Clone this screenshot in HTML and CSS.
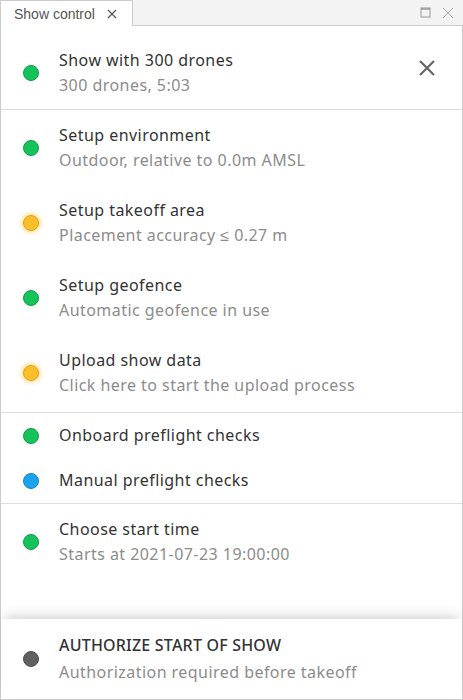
FILE: index.html
```html
<!DOCTYPE html>
<html lang="en">
<head>
    <meta charset="UTF-8">
    <title>Show control</title>
    <link rel="stylesheet" href="styles.css">
</head>
<body>
    <div class="window">
        <div class="tabbar">
            <div class="tab">
                <span>Show control</span>
                <svg class="tab-close" width="10" height="10" viewBox="0 0 10 10"><path d="M1 1L9 9M9 1L1 9" stroke="#555" stroke-width="1.2"/></svg>
            </div>
            <div class="window-buttons">
                <svg width="11" height="11" viewBox="0 0 11 11"><rect x="1" y="1" width="9" height="9" fill="none" stroke="#999" stroke-width="1"/><line x1="1" y1="2" x2="10" y2="2" stroke="#999" stroke-width="1.5"/></svg>
                <svg width="12" height="12" viewBox="0 0 12 12"><path d="M1 1L11 11M11 1L1 11" stroke="#aaa" stroke-width="1"/></svg>
            </div>
        </div>
        <div class="panel">
            <div class="item header-item">
                <span class="dot green"></span>
                <div class="text">
                    <div class="title">Show with 300 drones</div>
                    <div class="subtitle">300 drones, 5:03</div>
                </div>
                <svg class="close-btn" width="18" height="18" viewBox="0 0 18 18"><path d="M2 2L16 16M16 2L2 16" stroke="#666" stroke-width="2.2"/></svg>
            </div>

            <div class="group steps">
                <div class="item">
                    <span class="dot green"></span>
                    <div class="text">
                        <div class="title">Setup environment</div>
                        <div class="subtitle">Outdoor, relative to 0.0m AMSL</div>
                    </div>
                </div>
                <div class="item">
                    <span class="dot yellow"></span>
                    <div class="text">
                        <div class="title">Setup takeoff area</div>
                        <div class="subtitle">Placement accuracy ≤ 0.27 m</div>
                    </div>
                </div>
                <div class="item">
                    <span class="dot green"></span>
                    <div class="text">
                        <div class="title">Setup geofence</div>
                        <div class="subtitle">Automatic geofence in use</div>
                    </div>
                </div>
                <div class="item">
                    <span class="dot yellow"></span>
                    <div class="text">
                        <div class="title">Upload show data</div>
                        <div class="subtitle">Click here to start the upload process</div>
                    </div>
                </div>
            </div>

            <div class="group">
                <div class="item single">
                    <span class="dot green"></span>
                    <div class="text">
                        <div class="title">Onboard preflight checks</div>
                    </div>
                </div>
                <div class="item single">
                    <span class="dot blue"></span>
                    <div class="text">
                        <div class="title">Manual preflight checks</div>
                    </div>
                </div>
            </div>

            <div class="group last">
                <div class="item">
                    <span class="dot green"></span>
                    <div class="text">
                        <div class="title">Choose start time</div>
                        <div class="subtitle">Starts at 2021-07-23 19:00:00</div>
                    </div>
                </div>
            </div>

            <div class="footer">
                <div class="item">
                    <span class="dot grey"></span>
                    <div class="text">
                        <div class="title caps">AUTHORIZE START OF SHOW</div>
                        <div class="subtitle">Authorization required before takeoff</div>
                    </div>
                </div>
            </div>
        </div>
    </div>
</body>
</html>
```

FILE: styles.css
```css
body {
    margin: 0;
    background-color: #fff;
    font-family: 'Noto Sans', sans-serif;
}
.window {
    width: 463px;
    height: 700px;
    display: flex;
    flex-direction: column;
}
.tabbar {
    height: 26px;
    background-color: #f3f3f3;
    display: flex;
    align-items: stretch;
    justify-content: space-between;
    box-sizing: border-box;
    border-bottom: 1px solid #ccc;
}
.tab {
    width: 133px;
    box-sizing: border-box;
    background-color: #fff;
    border: 1px solid #ccc;
    border-bottom: none;
    margin-bottom: -1px;
    display: flex;
    align-items: center;
    padding-left: 13px;
    font-family: 'Liberation Sans', Arial, sans-serif;
    font-size: 14px;
    color: #555;
}
.tab-close {
    margin-left: 12px;
}
.window-buttons {
    display: flex;
    align-items: center;
    gap: 11px;
    padding-right: 9px;
}
.panel {
    flex: 1;
    border: 1px solid #ccc;
    border-top: none;
    display: flex;
    flex-direction: column;
}
.item {
    display: flex;
    align-items: center;
    height: 75px;
    padding-left: 22px;
    padding-right: 26px;
}
.item.single {
    height: 45px;
}
.header-item {
    height: 73px;
    padding-top: 10px;
    border-bottom: 1px solid #ddd;
}
.header-item .close-btn {
    margin-top: -10px;
}
.group {
    border-bottom: 1px solid #ddd;
}
.group.steps {
    padding-bottom: 2px;
}
.group.last {
    border-bottom: none;
    flex: 1;
}
.text {
    flex: 1;
    margin-left: 20px;
    letter-spacing: 0.45px;
}
.title {
    font-size: 16px;
    color: #333;
    line-height: 25px;
}
.subtitle {
    font-size: 16px;
    color: #8c8c8c;
    line-height: 25px;
}
.caps {
    font-weight: 500;
    letter-spacing: 0.2px;
}
.dot {
    width: 16px;
    height: 16px;
    border-radius: 50%;
    box-sizing: border-box;
    flex-shrink: 0;
}
.dot.green {
    background-color: #14c35a;
    border: 1px solid #0e9e46;
}
.dot.yellow {
    background-color: #fbbf2c;
    border: 1px solid #e0a015;
    box-shadow: 0 0 4px 2px rgba(251, 191, 44, 0.45);
}
.dot.blue {
    background-color: #1ca3ef;
    border: 1px solid #1486c8;
}
.dot.grey {
    background-color: #616161;
    border: 1px solid #4f4f4f;
}
.footer {
    height: 80px;
    box-shadow: 0 -6px 12px -4px rgba(0, 0, 0, 0.2);
}
.footer .item {
    height: 80px;
}
.footer .subtitle {
    margin-top: 2px;
}
```
